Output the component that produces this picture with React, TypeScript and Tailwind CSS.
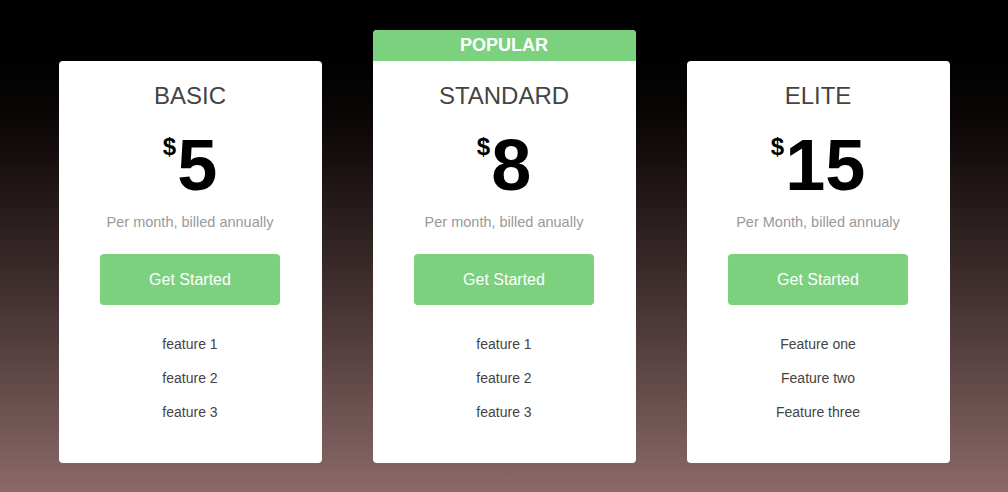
const plans = [
  {
    name: "BASIC",
    price: "5",
    note: "Per month, billed annually",
    features: ["feature 1", "feature 2", "feature 3"],
    popular: false,
  },
  {
    name: "STANDARD",
    price: "8",
    note: "Per month, billed anually",
    features: ["feature 1", "feature 2", "feature 3"],
    popular: true,
  },
  {
    name: "ELITE",
    price: "15",
    note: "Per Month, billed annualy",
    features: ["Feature one", "Feature two", "Feature three"],
    popular: false,
  },
];

function Card({ plan }: { plan: (typeof plans)[number] }) {
  return (
    <div className="w-[263px] rounded-[4px] bg-white overflow-hidden">
      {plan.popular && (
        <div className="h-[31px] bg-[#7bd17e] text-white font-bold text-[18px] leading-[31px] text-center">
          POPULAR
        </div>
      )}
      <div className="h-[402px] flex flex-col items-center pt-[21px]">
        <h2 className="text-[24px] leading-[28px] text-[#444]">{plan.name}</h2>
        <div className="mt-[19px] flex items-start text-black font-bold">
          <span className="text-[24px] leading-none mt-[6px] mr-[1px]">$</span>
          <span className="text-[72px] leading-none">{plan.price}</span>
        </div>
        <p className="mt-[13px] text-[14.5px] leading-[17px] text-[#999]">{plan.note}</p>
        <button className="mt-[23px] w-[180px] h-[51px] rounded-[4px] bg-[#7bd17e] text-white text-[16px]">
          Get Started
        </button>
        <ul className="mt-[31px] flex flex-col gap-[18px] text-[14px] leading-[16px] text-[#444] text-center">
          {plan.features.map((f) => (
            <li key={f}>{f}</li>
          ))}
        </ul>
      </div>
    </div>
  );
}

export default function App() {
  return (
    <div
      className="w-[1008px] h-[492px] bg-gradient-to-b from-black to-[#8b6a69] flex items-end justify-center gap-[51px] pb-[29px]"
      style={{ fontFamily: '"Liberation Sans", Arial, sans-serif' }}
    >
      {plans.map((p) => (
        <Card key={p.name} plan={p} />
      ))}
    </div>
  );
}
